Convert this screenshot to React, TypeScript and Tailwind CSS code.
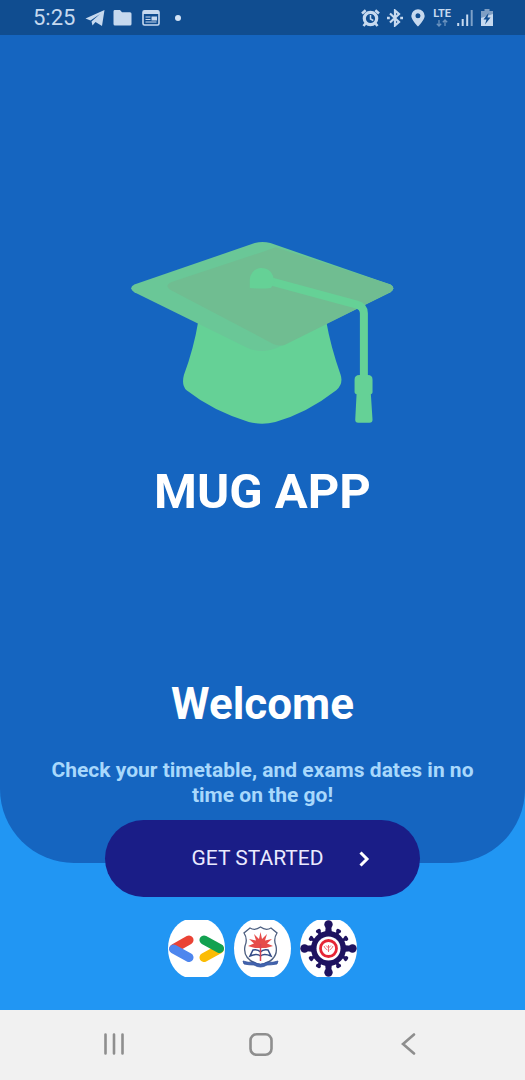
import React from "react";

function StatusBar() {
  return (
    <header className="flex h-[35px] shrink-0 items-center justify-between bg-[#104d90] pr-8 pl-[33px] text-[#c6d9ef]">
      <div className="flex items-center">
        <time className="text-[22px] leading-6">5:25</time>
        <svg className="ml-2.5 h-[18px] w-5" viewBox="0 0 20 18" fill="currentColor" aria-hidden="true">
          <path d="M.5 9.500 19.500 1 17 17 10.500 13 7.500 16.500 6.500 12.500 15 5 5.500 11.500Z" />
        </svg>
        <svg className="ml-2 h-[18px] w-[19px]" viewBox="0 0 19 18" fill="currentColor" aria-hidden="true">
          <path d="M1.500 1H7l2 2.200h8q1.500 0 1.500 1.500V15q0 1.500-1.500 1.500H2Q.5 16.500.5 15V2.500Q.5 1 1.500 1Z" />
        </svg>
        <svg className="ml-2.5 h-[18px] w-[18px]" viewBox="0 0 18 18" fill="none" stroke="currentColor" aria-hidden="true">
          <rect x="1" y="1.800" width="16" height="14.200" rx="1.500" strokeWidth="1.600" />
          <path d="M1 3.500h16" strokeWidth="3" />
          <path d="M3.500 8H8.500M3.500 10.500H8.500M3.500 13H14.500" strokeWidth="1" />
          <path d="M9.500 9.500H15" strokeWidth="4" />
        </svg>
        <span className="ml-[15px] size-1.5 rounded-full bg-[#d3e3f5]" />
      </div>
      <div className="flex items-center">
        <svg className="h-[18px] w-[19px]" viewBox="0 0 19 18" fill="none" stroke="currentColor" aria-hidden="true">
          <circle cx="9.500" cy="9.500" r="6.200" strokeWidth="3.200" />
          <path d="M9.500 6v4l2.800 1.500" strokeWidth="1.500" />
          <path d="M1 4.500 4.700 1.200M18 4.500 14.300 1.200M4.500 14.500 2.500 17M14.500 14.500l2 2.500" strokeWidth="2.600" />
        </svg>
        <svg className="ml-[7px] h-[18px] w-4" viewBox="0 0 16 18" fill="none" stroke="currentColor" strokeWidth="2.200" aria-hidden="true">
          <path d="M3 4.500 12 13 8 16.500V1.500L12 5 3 13.500" />
          <path d="M0 9h2.800M13.200 9H16" strokeWidth="2.600" />
        </svg>
        <svg className="ml-2 h-[18px] w-3.5" viewBox="0 0 14 18" fill="currentColor" aria-hidden="true">
          <path fillRule="evenodd" d="M7 .3A6.700 6.700 0 0 1 13.700 7C13.700 11 7 17.500 7 17.500S.3 11 .3 7A6.700 6.700 0 0 1 7 .3ZM7 4.300a2.500 2.500 0 1 0 0 5 2.500 2.500 0 0 0 0-5Z" />
        </svg>
        <div className="ml-2 flex flex-col items-center">
          <span className="text-[11px] leading-[10px] font-bold">LTE</span>
          <svg className="h-2 w-3 opacity-50" viewBox="0 0 12 8" fill="none" stroke="currentColor" strokeWidth="1.300" aria-hidden="true">
            <path d="M3 1v6M.8 4.800 3 7l2.200-2.200M9 7V1M6.800 3.200 9 1l2.200 2.200" />
          </svg>
        </div>
        <svg className="ml-1.5 h-[18px] w-4" viewBox="0 0 16 18" stroke="currentColor" strokeWidth="2" aria-hidden="true">
          <path d="M1.200 17v-3M5.700 17v-7M10.200 17V5.500" />
          <path d="M14.700 17V1" opacity=".6" />
        </svg>
        <svg className="ml-2 h-[18px] w-3" viewBox="0 0 12 18" aria-hidden="true">
          <path d="M0 2h3.500V0h5v2H12v7H0Z" fill="#7f9fc4" />
          <path d="M0 9 12 5v12H0Z" fill="currentColor" />
          <path d="M7.500 4 2.500 10.500H5.500L4 15.500 9.500 8.500H6.500Z" fill="#104d90" />
        </svg>
      </div>
    </header>
  );
}

function GraduationCap() {
  return (
    <svg className="w-1/2" viewBox="33 36 789 546" role="img" aria-label="Graduation cap">
      <path d="M235 275H620Q633 350 663 435Q672 462 650 482Q560 552 467 577Q427 587 387 577Q280 545 200 482Q184 466 192 436Q222 355 235 275Z" fill="#65d196" />
      <path d="M405 39Q428 33 452 39L813 164Q830 175 813 187L475 352Q428 374 382 354L43 187Q24 175 43 164Z" fill="#6ac797" />
      <path d="M468 52 813 164Q830 175 813 187L493 346Q478 350 462 343L155 182Q130 167 155 156L430 65Z" fill="#70bd91" />
      <path d="M445 152 712 224Q733 230 733 250V445" fill="none" stroke="#65d196" strokeWidth="24" />
      <path d="M390 174V150A36 36 0 0 1 460 138L464 160Q460 166 453 174Q425 178 390 174Z" fill="#65d196" />
      <path d="M720 436H745Q759 436 759 450V488Q759 493 754 494L759 570Q759 579 750 579H716Q707 579 707 570L711 494Q705 493 705 488V450Q705 436 720 436Z" fill="#65d196" />
    </svg>
  );
}

const badge = "size-[57px]";

function BadgeShape() {
  return <path d="M17 0H40C50 4 57 15 57 28.500S50 53 40 57H17C7 53 0 42 0 28.500S7 4 17 0Z" fill="white" />;
}

function DeveloperLogo() {
  return (
    <svg className={badge} viewBox="0 0 57 57" role="img" aria-label="Developer club">
      <BadgeShape />
      <g fill="none" strokeWidth="9" strokeLinecap="round">
        <path d="M6 28.500 21 20" stroke="#ea4335" />
        <path d="M5.500 29 21 37.500" stroke="#4e86ee" />
        <path d="M51.500 29 36 37.500" stroke="#fbbc04" />
        <path d="M51.500 28.500 36 20" stroke="#12a150" />
      </g>
    </svg>
  );
}

function UniversityCrest() {
  return (
    <svg className={badge} viewBox="0 0 57 57" role="img" aria-label="University crest">
      <BadgeShape />
      <path d="M16 8Q21 11 26.500 7Q32 11 37 8L43 13Q39 19 42 26C44 36 38 42 26.500 45C15 42 9 36 11 26Q14 19 10 13Z" fill="white" stroke="#4c5e7f" strokeWidth="1.300" />
      <path d="M26.500 12 28 19 33 14 31 20.500 38 19 33 23.500 39 26 32 28H21L14 26 20 23.500 15 19 22 20.500 20 14 25 19Z" fill="#e64c49" />
      <path d="M19 30Q24 29 26.500 32Q29 29 34 30L37 36Q30 33 26.500 36Q23 33 16 36Z" fill="white" stroke="#344b87" strokeWidth="1.500" />
      <path d="M26.500 24V41" stroke="#d74352" strokeWidth="1.500" />
      <path d="M9 41Q14 43 20 42Q26.500 46 33 42Q39 43 44 41L43 44Q37 45 33 45Q26.500 49 20 45Q15 45 10 44Z" fill="#4364af" stroke="#2f4f99" strokeWidth=".8" />
    </svg>
  );
}

function WheelLogo() {
  return (
    <svg className={badge} viewBox="0 0 57 57" role="img" aria-label="Students association">
      <BadgeShape />
      <g fill="#1e125f">
        {[0, 90, 180, 270].map((a) => (
          <g key={a} transform={`rotate(${a} 28.5 28.5)`}>
            <path d="M26 4H31L32 14H25Z" />
            <circle cx="28.500" cy="4.500" r="4.200" />
          </g>
        ))}
        {[30, 60, 120, 150, 210, 240, 300, 330].map((a) => (
          <g key={a} transform={`rotate(${a} 28.5 28.5)`}>
            <rect x="27" y="8" width="3" height="6" />
            <rect x="26" y="6.500" width="5" height="3.600" rx="1.500" />
          </g>
        ))}
        <circle cx="28.500" cy="28.500" r="17.500" />
      </g>
      <circle cx="28.500" cy="28.500" r="12" fill="white" />
      <circle cx="28.500" cy="28.500" r="8" fill="white" stroke="#e52535" strokeWidth="2.800" />
      <path d="M24 26Q25 29 27.500 30M33 26Q32 29 29.500 30M28.500 25V32M26 25.500 28.500 28 31 25.500" fill="none" stroke="#ee6a75" strokeWidth="1" />
    </svg>
  );
}

function NavigationBar() {
  return (
    <nav className="grid h-[70px] shrink-0 grid-cols-3 items-center bg-[#f1f1f1] px-10 text-[#8e8e8e]" aria-label="System navigation">
      <button type="button" aria-label="Recent apps" className="flex justify-center">
        <svg className="h-6 w-6" viewBox="0 0 24 24" fill="none" stroke="currentColor" strokeWidth="2.600" strokeLinecap="round">
          <path d="M3.500 1.500v19M12 1.500v19M20.500 1.500v19" />
        </svg>
      </button>
      <button type="button" aria-label="Home" className="flex justify-center">
        <svg className="mr-0.5 h-6 w-6" viewBox="0 0 24 24" fill="none" stroke="currentColor" strokeWidth="2.600">
          <rect x="1.500" y="1.300" width="21" height="20.500" rx="6" />
        </svg>
      </button>
      <button type="button" aria-label="Back" className="flex justify-center">
        <svg className="mr-1 h-6 w-6" viewBox="0 0 24 24" fill="none" stroke="currentColor" strokeWidth="2.600" strokeLinecap="round">
          <path d="M17 1.500 6 11 17 20.500" />
        </svg>
      </button>
    </nav>
  );
}

export default function App() {
  return (
    <div className="flex min-h-screen flex-col bg-[#2196f3] font-[Roboto,sans-serif]">
      <StatusBar />
      <main className="flex flex-1 flex-col items-center">
        <section className="flex w-full flex-1 flex-col items-center rounded-b-[74px] bg-[#1565c0] px-10 pt-[207px] pb-[55px] text-center">
          <div className="flex w-screen justify-center">
            <GraduationCap />
          </div>
          <h1 className="mt-10 text-[49px] leading-[56px] font-bold text-white">MUG APP</h1>
          <h2 className="mt-auto text-[44px] leading-[48px] font-bold text-white">Welcome</h2>
          <p className="mt-[30px] text-[21px] leading-[25px] font-bold text-[#a8d8fc]">
            Check your timetable, and exams dates in no time on the go!
          </p>
        </section>
        <button type="button" className="-mt-[43px] grid h-[77px] w-3/5 grid-cols-[1fr_auto_1fr] items-center rounded-full bg-[#1a1d87] text-[21px] text-[#eaeaff]">
          <span className="col-start-2 pr-2.5">GET STARTED</span>
          <svg className="ml-[18px] h-6 w-6 text-white" viewBox="0 0 24 24" fill="none" stroke="currentColor" strokeWidth="3" aria-hidden="true">
            <path d="M8.500 5.500 15 12 8.500 18.500" />
          </svg>
        </button>
        <div className="mt-[23px] mb-[33px] flex gap-[9px]">
          <DeveloperLogo />
          <UniversityCrest />
          <WheelLogo />
        </div>
      </main>
      <NavigationBar />
    </div>
  );
}
